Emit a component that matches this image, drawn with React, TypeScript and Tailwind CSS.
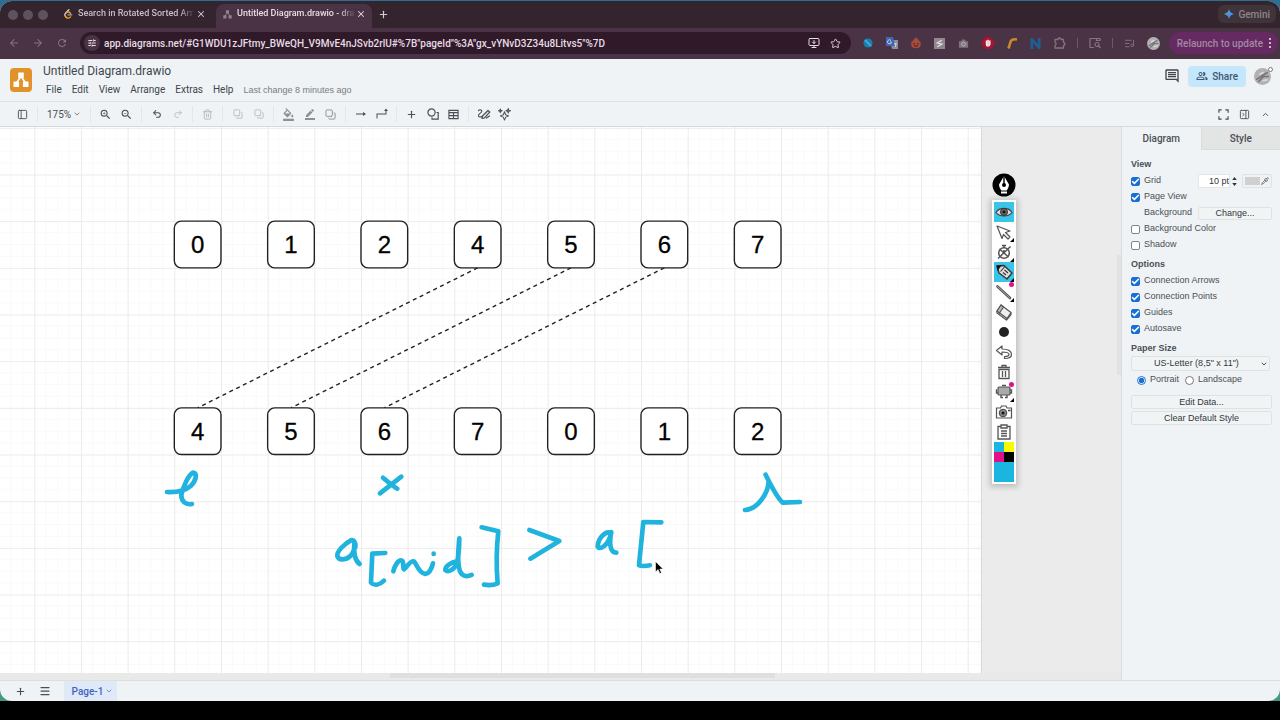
import type { ReactNode } from "react"
import {
    Check, ChevronDown, ChevronUp, Copy, ListMusic, Menu, MonitorDown, PanelLeft, PanelRightClose,
    Pipette, Plus, Redo2, Star, Trash2, Undo2, X,
} from "lucide-react"
import {
    MdArrowBack, MdArrowForward, MdBorderColor, MdFormatColorFill, MdOutlineComment,
    MdOutlinePeopleAlt, MdRefresh, MdTune, MdZoomIn, MdZoomOut,
} from "react-icons/md"

//diagram geometry, one grid cell is UNIT wide
const UNIT = 46.67
const LEFT = 34.3
const TOP = 47.5

const topRow = ["0", "1", "2", "4", "5", "6", "7"]
const bottomRow = ["4", "5", "6", "7", "0", "1", "2"]
const links = [[3, 0], [4, 1], [5, 2]]

const nodeX = (i: number) => LEFT + UNIT * (3 + 2 * i)
const centerX = (i: number) => nodeX(i) + UNIT / 2

function Node({ x, y, label }: { x: number; y: number; label: string }) {
    return (
        <g>
            <rect x={x} y={y} width={UNIT} height={UNIT} rx="7" fill="#fff" stroke="#222" strokeWidth="1.4" />
            <text x={x + UNIT / 2} y={y + 32} textAnchor="middle" fontSize="24" fill="#000" stroke="#000" strokeWidth="0.3">{label}</text>
        </g>
    )
}

function Diagram() {
    const bottomY = TOP + UNIT * 5

    return (
        <svg className="block h-full w-full font-['Liberation_Sans',sans-serif]">
            <defs>
                <pattern id="grid" x={LEFT} y={TOP} width={UNIT} height={UNIT} patternUnits="userSpaceOnUse">
                    <path d="M11.7 0V47M23.3 0V47M35 0V47M0 11.7H47M0 23.3H47M0 35H47" stroke="#f9f9f9" fill="none" />
                    <path d="M0.5 0V47M0 0.5H47" stroke="#ebebeb" fill="none" />
                </pattern>
            </defs>
            <rect width="100%" height="100%" fill="url(#grid)" />

            {links.map(([from, to]) => (
                <line key={from} x1={centerX(from)} y1={TOP + UNIT * 2} x2={centerX(to)} y2={bottomY} stroke="#222" strokeWidth="1.4" strokeDasharray="4 3.6" />
            ))}
            {topRow.map((label, i) => <Node key={i} x={nodeX(i)} y={TOP + UNIT} label={label} />)}
            {bottomRow.map((label, i) => <Node key={i} x={nodeX(i)} y={bottomY} label={label} />)}

            {/* pen strokes */}
            <g fill="none" stroke="#1fb3de" strokeWidth="14" strokeLinecap="round" strokeLinejoin="round">
                <g transform="translate(150 333) scale(0.3333)">
                    <path d="M51 96C76 97 106 92 122 78C140 60 142 40 129 38C114 46 99 82 94 105C94 124 106 136 126 132" />
                    <path d="M699 53C712 64 728 78 742 86M754 50L690 100" />
                    <path d="M616 262C618 248 612 238 603 241C585 250 560 274 562 288C567 304 596 300 608 279C614 268 614 254 613 250C611 275 615 302 629 312" />
                    <path d="M706 279L667 281L663 368C674 379 690 374 702 362" />
                    <path d="M730 334C734 316 746 298 756 302C764 308 756 322 762 328C770 322 782 300 792 304C800 310 804 338 826 342C840 340 846 322 849 310M851 281V282" />
                    <path d="M920 304C905 306 886 318 886 330C894 338 912 330 920 312C926 290 928 262 928 235C925 270 920 306 930 334C938 352 954 350 965 345" />
                    <path d="M995 202L1045 214C1040 260 1038 310 1043 370C1030 376 1015 376 1002 374" />
                </g>
                <g transform="translate(500 333) scale(0.3333)">
                    <path d="M88 210L178 243L91 296" />
                    <path d="M332 218C315 212 294 236 293 260C299 272 326 258 334 216C328 245 328 278 349 278" />
                    <path d="M484 187L430 186L417 316C430 320 440 318 450 316" />
                    <path d="M797 44C812 75 830 110 848 128L900 126M806 62C806 95 776 148 735 150" />
                </g>
            </g>
            <path d="M655.500 434.500v10.500l2.600-2.400 1.700 4 1.700-.8-1.700-3.700h3.400z" fill="#000" stroke="#fff" strokeWidth="0.600" />
        </svg>
    )
}

function Tool({ label, active, corner, dot, children }: { label: string; active?: boolean; corner?: boolean; dot?: boolean; children: ReactNode }) {
    return (
        <button aria-label={label} className={`relative flex h-5 w-5 items-center justify-center ${active ? "bg-[#38c5e8]" : "bg-white"}`}>
            {children}
            {corner && <span className="absolute bottom-0 right-0 border-b-4 border-l-4 border-b-black border-l-transparent" />}
            {dot && <span className="absolute right-0 top-0 h-[5px] w-[5px] rounded-full bg-[#e0108a]" />}
        </button>
    )
}

function PenTools() {
    return (
        <div className="absolute right-[105px] top-[46px] flex flex-col items-center gap-[3px]">
            <button aria-label="Pen" className="h-6 w-6">
                <svg viewBox="0 0 24 24">
                    <circle cx="12" cy="12" r="11.500" fill="#000" />
                    <path d="M12 3L7 11.500C7 14 8.500 16 9.200 17.500H14.800C15.500 16 17 14 17 11.500Z" fill="#fff" />
                    <path d="M12 3V11" stroke="#000" strokeWidth="1.400" />
                    <path d="M9 19.500H15" stroke="#fff" strokeWidth="2" />
                    <circle cx="12" cy="12" r="2" fill="#000" />
                </svg>
            </button>
            <div className="flex flex-col bg-white p-[2px] shadow-[0_1px_6px_2px_rgba(0,0,0,0.2)]">
                <Tool label="Show" active>
                    <svg viewBox="0 0 18 18" className="h-[18px] w-[18px]">
                        <path d="M1 9.500C4 4 14 4 17 9.500C14 14 4 14 1 9.500Z" fill="#ddd" stroke="#444" strokeWidth="1.200" />
                        <circle cx="9" cy="9" r="3.500" fill="#666" stroke="#333" />
                        <circle cx="9" cy="9" r="1.400" fill="#111" />
                    </svg>
                </Tool>
                <Tool label="Select" corner>
                    <svg viewBox="0 0 18 18" className="h-[18px] w-[18px]">
                        <path d="M2 3L15 8L10.500 9.500L15 14L13 16L8.500 11.500L7 15.500Z" fill="#fff" stroke="#555" strokeWidth="1.200" strokeLinejoin="round" />
                    </svg>
                </Tool>
                <Tool label="Timer" corner>
                    <svg viewBox="0 0 18 18" className="h-[18px] w-[18px]" fill="none" stroke="#555" strokeWidth="1.500">
                        <circle cx="9" cy="10" r="5.300" />
                        <path d="M7 2.500H11M9 3V5M9 10V7M3 15.500L15.500 3.500M4.500 6L13.500 14" />
                    </svg>
                </Tool>
                <Tool label="Highlighter" active corner>
                    <svg viewBox="0 0 18 18" className="h-[18px] w-[18px]">
                        <path d="M2 3L9 2.500L17 10L12 16L4 10Z" fill="#ddd" stroke="#333" strokeWidth="1.400" strokeLinejoin="round" />
                        <path d="M1.500 2.500L6.500 2.500L2.500 8Z" fill="#111" />
                        <path d="M9.500 7L13 10M8 9.500L11 12M9.500 4L5.500 8.500" stroke="#333" strokeWidth="1.100" />
                    </svg>
                </Tool>
                <Tool label="Line" corner dot>
                    <svg viewBox="0 0 18 18" className="h-[18px] w-[18px]" strokeLinecap="round">
                        <path d="M2.500 3.500L15 15" stroke="#555" strokeWidth="2.600" />
                        <path d="M2.500 3.500L15 15" stroke="#aaa" strokeWidth="1" />
                    </svg>
                </Tool>
                <Tool label="Eraser">
                    <svg viewBox="0 0 18 18" className="h-[18px] w-[18px]" stroke="#555" strokeWidth="1.200" strokeLinejoin="round">
                        <path d="M6 2L16 9.500L12 15.500L2 8Z" fill="#eee" />
                        <path d="M2 8L6 2L8.500 4L4.500 10Z" fill="#bbb" />
                        <path d="M2 8V10L11.500 17L16 11.500V9.500" fill="none" />
                    </svg>
                </Tool>
                <Tool label="Pen size"><span className="h-[10px] w-[10px] rounded-full bg-[#222]" /></Tool>
                <Tool label="Undo">
                    <svg viewBox="0 0 18 18" className="h-[18px] w-[18px]">
                        <path d="M1.500 7.500L7 3V6C13 6 16.500 8 16.500 11.500C16.500 14.500 14 15.500 9.500 15.500V13.500C12.500 13.500 14 13 14 11.500C14 9.500 11 9 7 9V12Z" fill="#fff" stroke="#555" strokeWidth="1.200" strokeLinejoin="round" />
                    </svg>
                </Tool>
                <Tool label="Clear">
                    <svg viewBox="0 0 18 18" className="h-[18px] w-[18px]" fill="none" stroke="#555" strokeWidth="1.300">
                        <path d="M3 4.500H15M7 4.500V2.500H11V4.500M4 6.500H14V15.500H4ZM7.500 8V14M10.500 8V14" />
                    </svg>
                </Tool>
                <Tool label="Board" corner dot>
                    <svg viewBox="0 0 18 18" className="h-[18px] w-[18px]">
                        <rect x="3" y="4" width="12" height="8" rx="1" fill="#aaa" stroke="#555" strokeWidth="1.200" />
                        <path d="M2 7H1.500V10H3M15 7H16.500V10H15M7 2.500H11M6 12V14.500H8M12 12V14.500H10" stroke="#555" strokeWidth="1.400" fill="none" />
                    </svg>
                </Tool>
                <Tool label="Screenshot">
                    <svg viewBox="0 0 18 18" className="h-[18px] w-[18px]">
                        <path d="M1.500 5H5.500L6.500 3H11L12 5H16.500V15H1.500Z" fill="#fff" stroke="#555" strokeWidth="1.200" />
                        <circle cx="8" cy="10" r="3.800" fill="#888" stroke="#444" />
                        <circle cx="8" cy="10" r="1.500" fill="#111" />
                        <path d="M13 7.500H15.500" stroke="#444" strokeWidth="1.500" />
                    </svg>
                </Tool>
                <Tool label="Clipboard">
                    <svg viewBox="0 0 18 18" className="h-[18px] w-[18px]" fill="none" stroke="#555" strokeWidth="1.300">
                        <path d="M6 3.500H3V16H15V3.500H12M6 2H12V5H6ZM6 8H12M6 10.500H12M6 13H12" />
                    </svg>
                </Tool>
                <div className="grid grid-cols-2">
                    <button aria-label="Blue" className="h-[10px] bg-[#1cb5e0]" />
                    <button aria-label="Yellow" className="h-[10px] bg-[#fbf800]" />
                    <button aria-label="Magenta" className="h-[10px] bg-[#e0108a]" />
                    <button aria-label="Black" className="h-[10px] bg-black" />
                </div>
                <div className="h-5 bg-[#1cb5e0]" />
            </div>
        </div>
    )
}

//three linked boxes, used in the tab and in the header
function DrawioGlyph({ className }: { className: string }) {
    return (
        <svg viewBox="0 0 16 16" className={className} fill="currentColor" stroke="currentColor">
            <rect x="5.200" y="0.500" width="5.600" height="5.500" rx="0.500" stroke="none" />
            <rect x="0.500" y="9.500" width="5.600" height="5.500" rx="0.500" stroke="none" />
            <rect x="9.900" y="9.500" width="5.600" height="5.500" rx="0.500" stroke="none" />
            <path d="M7.500 5L3.500 11M8.500 5L12.500 11" strokeWidth="1.700" />
        </svg>
    )
}

function TabStrip() {
    return (
        <div className="flex h-[27px] items-end bg-[#34242e] pr-1 text-[10px] font-medium text-[#d8ccd4]">
            <div className="flex h-6 flex-1 items-stretch">
                <div className="flex items-center gap-[5px] pb-[2px] pl-2 pr-[14px]">
                    <span className="h-[10px] w-[10px] rounded-full bg-[#5f535b]" />
                    <span className="h-[10px] w-[10px] rounded-full bg-[#5f535b]" />
                    <span className="h-[10px] w-[10px] rounded-full bg-[#5f535b]" />
                </div>
                <div className="flex w-[148px] items-center pb-1 pr-1 text-[9px]">
                    <svg viewBox="0 0 12 12" className="ml-px mr-[5px] h-[10px] w-[10px] shrink-0" fill="none" strokeWidth="1.700" strokeLinecap="round">
                        <path d="M7 1L3 5C2 6 2 8 3 9" stroke="#d8ccd4" />
                        <path d="M4 4.500C6 3 8 4 9 5M3 9C5 12 8 11 9 9.500" stroke="#eba02c" />
                        <path d="M6 7H10.500" stroke="#aaa" />
                    </svg>
                    <span className="flex-1 whitespace-nowrap text-[#c9bcc5] mask-r-from-85%">Search in Rotated Sorted Arr</span>
                    <button aria-label="Close tab"><X size={10} strokeWidth={2.5} /></button>
                </div>
                <div className="ml-[6px] flex w-[156px] items-center rounded-t-lg bg-[#4a3344] pb-1 pl-1 pr-[6px] text-[9px] text-[#e6dce3]">
                    <DrawioGlyph className="ml-[3px] mr-[5px] h-[9px] w-[9px] shrink-0 text-[#8f8390]" />
                    <span className="flex-1 whitespace-nowrap mask-r-from-85%">Untitled Diagram.drawio - dra</span>
                    <button aria-label="Close tab"><X size={10} strokeWidth={2.5} /></button>
                </div>
                <button aria-label="New tab" className="ml-[6px] pb-1"><Plus size={11} strokeWidth={2.5} /></button>
            </div>
            <button className="mb-[5px] flex h-[18px] items-center gap-1 rounded-md bg-[#40343b] px-[6px] text-[#91858c]">
                <svg viewBox="0 0 10 10" className="h-[10px] w-[10px]">
                    <defs>
                        <linearGradient id="gem" x1="0" x2="1" y2="0.500">
                            <stop offset="0" stopColor="#e3c04c" />
                            <stop offset="0.300" stopColor="#58b58a" />
                            <stop offset="0.600" stopColor="#4c8cf5" />
                        </linearGradient>
                    </defs>
                    <path d="M5 0C5.700 3 7 4.300 10 5C7 5.700 5.700 7 5 10C4.300 7 3 5.700 0 5C3 4.300 4.300 3 5 0Z" fill="url(#gem)" />
                </svg>
                Gemini
            </button>
        </div>
    )
}

function Extension({ label, children }: { label: string; children: ReactNode }) {
    return <button aria-label={label} className="flex w-6 items-center justify-center">{children}</button>
}

function AddressBar() {
    return (
        <div className="flex h-[31px] items-center bg-[#4a3344] pb-px pr-[2px] text-[#85747f]">
            <div className="flex w-20 items-center gap-3 pl-2">
                <button aria-label="Back"><MdArrowBack size={12} /></button>
                <button aria-label="Forward"><MdArrowForward size={12} /></button>
                <button aria-label="Reload"><MdRefresh size={12} /></button>
            </div>
            <div className="flex h-[22px] flex-1 items-center rounded-full bg-[#301a2a] pl-1 pr-[10px] text-[#e6dce3]">
                <span className="flex h-4 w-4 items-center justify-center rounded-full bg-[#4a3344]"><MdTune size={10} /></span>
                <input
                    aria-label="Address"
                    className="ml-1 min-w-0 flex-1 bg-transparent text-[10px] font-medium outline-none"
                    defaultValue={'app.diagrams.net/#G1WDU1zJFtmy_BWeQH_V9MvE4nJSvb2rlU#%7B"pageId"%3A"gx_vYNvD3Z34u8Litvs5"%7D'}
                />
                <button aria-label="Install app"><MonitorDown size={12} /></button>
                <button aria-label="Bookmark" className="ml-[10px]"><Star size={11} /></button>
            </div>
            <div className="ml-[5px] flex h-5">
                <Extension label="Browser sync">
                    <svg viewBox="0 0 12 12" className="h-[10px] w-[10px]"><circle cx="6" cy="6" r="5.500" fill="#167fb0" /><path d="M3 3L9 9" stroke="#42a8cc" strokeWidth="2.500" strokeLinecap="round" /></svg>
                </Extension>
                <Extension label="Translate">
                    <svg viewBox="0 0 12 12" className="h-3 w-3"><path d="M4 3H12V12H6Z" fill="#8f8f9a" /><path d="M0 0H7L9 9H0Z" fill="#3f66b8" /><path d="M5 3.500A2 2 0 1 0 5.500 5H4M8 7H11M9.500 6V10" fill="none" stroke="#ccd" /></svg>
                </Extension>
                <Extension label="Honey">
                    <svg viewBox="0 0 12 12" className="h-3 w-3"><path d="M6 0C7 2 9 2 9 4C11 4 11 7 10.500 9C9.500 12 2.500 12 1.500 9C1 7 1 4 3 4C3 2 5 2 6 0Z" fill="#a84b38" /><path d="M4 6V7.500M8 6V7.500M4 9H8" stroke="#3c2532" strokeWidth="1.200" /></svg>
                </Extension>
                <Extension label="Notes">
                    <svg viewBox="0 0 12 12" className="h-[11px] w-[11px]"><rect width="12" height="12" fill="#908790" /><path d="M8.500 2.500L3.500 5.500L8.500 6.500L3.500 9.500" fill="none" stroke="#e4dfe4" strokeWidth="1.400" /></svg>
                </Extension>
                <Extension label="Capture">
                    <svg viewBox="0 0 12 12" className="h-[11px] w-[11px]"><path d="M1 3.500H3.500L4.500 1.500H7.500L8.500 3.500H11V10.500H1Z" fill="#80737d" /><circle cx="6" cy="6.800" r="2" fill="none" stroke="#c2b8c0" /></svg>
                </Extension>
                <Extension label="Ad blocker">
                    <svg viewBox="0 0 12 12" className="h-3 w-3"><path d="M3.500 0H8.500L12 3.500V8.500L8.500 12H3.500L0 8.500V3.500Z" fill="#a71330" /><path d="M4.500 3.500V7.500C4.500 9.500 7.500 9.500 7.800 7.500V3.500M6.100 2.800V8" stroke="#eee" strokeWidth="1.500" fill="none" /></svg>
                </Extension>
                <Extension label="Rewards">
                    <svg viewBox="0 0 12 12" className="h-3 w-3"><path d="M2.500 11.500L4.500 5C5 3 7 1.800 11 2.500" fill="none" stroke="#c98a2c" strokeWidth="2.600" /></svg>
                </Extension>
                <Extension label="Notebook">
                    <svg viewBox="0 0 12 12" className="h-[11px] w-[11px]"><path d="M2 12V1.500L10 10.500V0" fill="none" stroke="#1f5d93" strokeWidth="3" /></svg>
                </Extension>
                <Extension label="Extensions">
                    <svg viewBox="0 0 12 12" className="h-3 w-3" fill="none" stroke="currentColor" strokeWidth="1.300" strokeLinejoin="round"><path d="M1 2.500H4A1.500 1.500 0 0 1 7 2.500H9.500V5.500A1.500 1.500 0 0 1 9.500 8.500V11H1V8.200A1.500 1.500 0 0 0 1 5.300Z" /></svg>
                </Extension>
            </div>
            <span className="mx-[5px] h-[10px] w-px bg-[#6c5866]" />
            <Extension label="Search tabs">
                <svg viewBox="0 0 12 12" className="h-3 w-3" fill="none" stroke="currentColor" strokeWidth="1.200"><path d="M5 10.500H1V1.500H11V4M7.500 1.500V3.500H11" /><circle cx="8" cy="7.500" r="2" /><path d="M9.500 9L11.500 11" /></svg>
            </Extension>
            <span className="mx-[5px] h-[10px] w-px bg-[#6c5866]" />
            <Extension label="Media"><ListMusic size={11} /></Extension>
            <Extension label="Profile"><Avatar className="h-[13px] w-[13px]" /></Extension>
            <button className="ml-[3px] flex h-[22px] items-center gap-1 whitespace-nowrap rounded-full bg-[#642a61] pl-2 pr-[6px] text-[10px] font-medium text-[#a687a5]">
                Relaunch to update
                <svg viewBox="0 0 4 12" className="ml-px h-3 w-1" fill="#e6dce3"><circle cx="2" cy="2" r="1.100" /><circle cx="2" cy="6" r="1.100" /><circle cx="2" cy="10" r="1.100" /></svg>
            </button>
        </div>
    )
}

function Avatar({ className }: { className: string }) {
    return (
        <svg viewBox="0 0 16 16" className={className}>
            <circle cx="8" cy="8" r="8" fill="#b3b0b2" />
            <path d="M2 11L13 4M4 13L9 8L14 8" stroke="#77737a" strokeWidth="1.500" fill="none" />
            <path d="M5 6L9 4M8 12L13 11" stroke="#dcdcdc" strokeWidth="1.500" />
        </svg>
    )
}

function Header() {
    return (
        <header className="flex h-[43px] items-center border-b border-[#dfe2e4] pl-[10px] pr-[9px] text-[#40464c]">
            <a href="#" aria-label="draw.io" className="flex h-6 w-[22px] items-center justify-center rounded-sm bg-[#e2922b] text-white">
                <DrawioGlyph className="h-4 w-4" />
            </a>
            <div className="ml-1 flex-1">
                <h1 className="pl-[7px] text-[12px] leading-5">Untitled Diagram.drawio</h1>
                <nav className="flex items-center gap-[10px] pl-[10px] text-[10px] leading-[18px]">
                    <button>File</button>
                    <button>Edit</button>
                    <button>View</button>
                    <button>Arrange</button>
                    <button>Extras</button>
                    <button>Help</button>
                    <span className="font-['Liberation_Sans',sans-serif] text-[9px] text-[#777d82]">Last change 8 minutes ago</span>
                </nav>
            </div>
            <div className="flex items-center pb-2">
                <button aria-label="Comments"><MdOutlineComment size={16} /></button>
                <button className="ml-2 flex h-[21px] items-center gap-1 rounded-sm bg-[#c4e7fb] px-2 text-[10px] font-medium text-[#3d5872]">
                    <MdOutlinePeopleAlt size={12} /> Share
                </button>
                <span className="relative ml-2">
                    <Avatar className="h-[17px] w-[17px]" />
                    <span className="absolute -right-[2px] -top-[1px] h-[5px] w-[5px] rounded-full border border-[#777] bg-white" />
                </span>
            </div>
        </header>
    )
}

function Icon({ label, off, children }: { label: string; off?: boolean; children: ReactNode }) {
    return <button aria-label={label} className={`flex w-[21px] items-center justify-center ${off ? "text-[#b4b8bb]" : "text-[#4a4f54]"}`}>{children}</button>
}

function Sep() {
    return <span className="mx-1 h-4 w-px self-center bg-[#e4e7e9]" />
}

function Toolbar() {
    return (
        <div className="flex h-[25px] items-stretch border-b border-[#d6d9da] pl-3 pr-1">
            <Icon label="Shapes panel"><PanelLeft size={11} /></Icon>
            <Sep />
            <button className="flex w-11 items-center justify-center gap-[2px] text-[10px] text-[#4a4f54]">175% <ChevronDown size={8} /></button>
            <Sep />
            <Icon label="Zoom in"><MdZoomIn size={13} /></Icon>
            <Icon label="Zoom out"><MdZoomOut size={13} /></Icon>
            <Sep />
            <Icon label="Undo"><Undo2 size={10} strokeWidth={2.5} /></Icon>
            <Icon label="Redo" off><Redo2 size={10} /></Icon>
            <Sep />
            <Icon label="Delete" off><Trash2 size={11} /></Icon>
            <Sep />
            <Icon label="To front" off><Copy size={10} className="rotate-180" /></Icon>
            <Icon label="To back" off><Copy size={10} className="rotate-180" /></Icon>
            <Sep />
            <Icon label="Fill color"><MdFormatColorFill size={13} className="text-[#8c9093]" /></Icon>
            <Icon label="Line color"><MdBorderColor size={12} className="text-[#8c9093]" /></Icon>
            <Icon label="Shadow"><Copy size={11} className="rotate-180 text-[#8c9093]" /></Icon>
            <Sep />
            <Icon label="Connection">
                <svg viewBox="0 0 12 12" className="h-3 w-3" fill="currentColor"><path d="M1 5.500H8V4L11 6L8 8V6.500H1Z" /></svg>
            </Icon>
            <Icon label="Waypoints">
                <svg viewBox="0 0 12 12" className="h-3 w-3" fill="currentColor"><path d="M0.500 10.500V5.500H9.500V3H8L10 0.500L12 3H10.500V6.500H1.500V10.500Z" /></svg>
            </Icon>
            <Sep />
            <Icon label="Insert"><Plus size={11} strokeWidth={2.5} /></Icon>
            <Icon label="Shapes">
                <svg viewBox="0 0 12 12" className="h-3 w-3" fill="none" stroke="currentColor" strokeWidth="1.200"><circle cx="4.500" cy="4.500" r="3.600" /><path d="M9.500 4.500H11.200V11.200H5V9.500" /></svg>
            </Icon>
            <Icon label="Table">
                <svg viewBox="0 0 12 12" className="h-[11px] w-[11px]" fill="none" stroke="currentColor" strokeWidth="1.200"><path d="M1 1.500H11V10.500H1ZM1 4H11M1 7.200H11M6 4V10.500" /></svg>
            </Icon>
            <Sep />
            <Icon label="Freehand">
                <svg viewBox="0 0 14 12" className="h-3 w-[14px]" fill="none" stroke="currentColor" strokeWidth="1.200" strokeLinecap="round" strokeLinejoin="round"><path d="M1.500 2.500C3 1 5.500 2 4.500 4C3 6 1 6 1.500 8C2 9.500 4 9 4.500 8.500M5 10.500L5.500 8L11 2.500L12.800 4L7.500 9.800ZM9.500 10C10.500 9 11.500 9 12.500 8" /></svg>
            </Icon>
            <Icon label="Generate">
                <svg viewBox="0 0 14 14" className="h-[13px] w-[13px]" fill="none" stroke="currentColor" strokeWidth="1.100" strokeLinejoin="round"><path d="M7 4L8.300 7.200L11.500 8.500L8.300 9.800L7 13L5.700 9.800L2.500 8.500L5.700 7.200ZM2.500 1L3 2.500L4.500 3L3 3.500L2.500 5L2 3.500L0.500 3L2 2.500ZM11 0.500L11.600 2.400L13.500 3L11.600 3.600L11 5.500L10.400 3.600L8.500 3L10.400 2.400Z" /></svg>
            </Icon>
            <div className="flex flex-1 justify-end">
                <Icon label="Fullscreen">
                    <svg viewBox="0 0 12 12" className="h-[11px] w-[11px]" fill="none" stroke="currentColor" strokeWidth="1.300"><path d="M1 4V1H4M8 1H11V4M11 8V11H8M4 11H1V8" /></svg>
                </Icon>
                <Icon label="Format panel"><PanelRightClose size={11} /></Icon>
                <Icon label="Collapse"><ChevronUp size={9} strokeWidth={2.5} /></Icon>
            </div>
        </div>
    )
}

function CheckRow({ label, checked, children }: { label: string; checked?: boolean; children?: ReactNode }) {
    return (
        <div className="flex h-4 items-center">
            <label className="flex flex-1 items-center gap-1 whitespace-nowrap">
                <span className="relative flex h-[9px] w-[9px]">
                    <input type="checkbox" defaultChecked={checked} className="peer h-[9px] w-[9px] appearance-none rounded-[2px] border border-[#80868b] bg-white checked:border-[#1a6fd4] checked:bg-[#1a6fd4]" />
                    <Check size={9} strokeWidth={4} className="pointer-events-none absolute inset-0 hidden text-white peer-checked:block" />
                </span>
                {label}
            </label>
            {children}
        </div>
    )
}

function FormatPanel() {
    const box = "rounded-[2px] border border-[#dfe2e4] bg-[#f1f4f5] text-[9px] text-[#33373a]"

    return (
        <aside className="w-[159px] shrink-0 border-l border-[#d9dcde] bg-[#eff3f5] font-['Liberation_Sans',sans-serif] text-[9px] text-[#4b5055]">
            <div className="flex h-[23px] font-['Roboto',sans-serif] text-[10px] font-medium">
                <button className="flex-1">Diagram</button>
                <button className="flex-1 border-b border-l border-[#dcdcdc] bg-[#e3e4e4]">Style</button>
            </div>
            <div className="flex flex-col gap-[3px] pl-[9px] pr-2 pt-[6px]">
                <section>
                    <h2 className="mb-px font-bold leading-4">View</h2>
                    <CheckRow label="Grid" checked>
                        <input aria-label="Grid size" defaultValue="10 pt" className="h-[14px] w-8 border border-[#e3e6e8] bg-white text-right text-[9px] text-[#33373a]" />
                        <span className="flex w-[9px] flex-col items-center">
                            <button aria-label="Increase" className="flex h-[6px] items-center"><svg viewBox="0 0 6 4" className="h-[3px] w-[5px]"><path d="M0 4L3 0L6 4Z" fill="#333" /></svg></button>
                            <button aria-label="Decrease" className="flex h-[6px] items-center"><svg viewBox="0 0 6 4" className="h-[3px] w-[5px]"><path d="M0 0L3 4L6 0Z" fill="#333" /></svg></button>
                        </span>
                        <button aria-label="Grid color" className="ml-[3px] flex h-[14px] w-[30px] items-center justify-between rounded-[2px] border border-[#dfe2e4] px-[2px]">
                            <span className="h-2 w-[15px] bg-[#d0d0d0]" />
                            <Pipette size={8} />
                        </button>
                    </CheckRow>
                    <CheckRow label="Page View" checked />
                    <div className="flex h-4 items-center justify-between pl-[13px]">
                        Background
                        <button className={`${box} h-[13px] w-[74px] leading-[11px]`}>Change...</button>
                    </div>
                    <CheckRow label="Background Color" />
                    <CheckRow label="Shadow" />
                </section>
                <section>
                    <h2 className="mb-px font-bold leading-4">Options</h2>
                    <CheckRow label="Connection Arrows" checked />
                    <CheckRow label="Connection Points" checked />
                    <CheckRow label="Guides" checked />
                    <CheckRow label="Autosave" checked />
                </section>
                <section>
                    <h2 className="font-bold leading-4">Paper Size</h2>
                    <div className="relative mr-[2px]">
                        <select aria-label="Paper size" className={`${box} block h-[15px] w-full appearance-none pr-2 text-center leading-[11px]`}>
                            <option>US-Letter (8,5" x 11")</option>
                        </select>
                        <ChevronDown size={8} strokeWidth={3} className="pointer-events-none absolute right-[2px] top-1" />
                    </div>
                    <div className="flex h-[18px] items-center gap-[6px] pl-[6px]">
                        <label className="flex items-center gap-1">
                            <input type="radio" name="orientation" defaultChecked className="h-[9px] w-[9px] accent-[#1a6fd4]" /> Portrait
                        </label>
                        <label className="flex items-center gap-1">
                            <input type="radio" name="orientation" className="h-[9px] w-[9px]" /> Landscape
                        </label>
                    </div>
                    <div className="mt-[6px] flex flex-col gap-[2px]">
                        <button className={`${box} h-[14px] leading-3`}>Edit Data...</button>
                        <button className={`${box} h-[14px] leading-3`}>Clear Default Style</button>
                    </div>
                </section>
            </div>
        </aside>
    )
}

function App() {
    return (
        <div className="flex h-screen flex-col overflow-hidden bg-black font-['Roboto',sans-serif]">
            <div className="flex min-h-0 flex-1 flex-col bg-linear-to-b from-[#2b6f92] to-[#4a9580] pt-px">
                <div className="flex min-h-0 flex-1 flex-col overflow-hidden rounded-xl bg-[#eff3f5]">
                    <TabStrip />
                    <AddressBar />
                    <Header />
                    <Toolbar />
                    <div className="flex min-h-0 flex-1">
                        <div className="flex min-w-0 flex-1 flex-col">
                            <main className="relative flex min-h-0 flex-1 bg-[#ebebeb]">
                                <div className="min-w-0 flex-1 border-r border-[#d8d8d8] bg-white">
                                    <Diagram />
                                </div>
                                <div className="flex w-[139px] flex-col justify-center">
                                    <span className="mb-[170px] h-[120px] w-1 self-end bg-[#e2e2e2]" />
                                </div>
                                <PenTools />
                            </main>
                            <div className="flex h-[7px] justify-center bg-[#e9e9e8] pl-11">
                                <span className="h-[5px] w-[385px] bg-[#dfdfdf]" />
                            </div>
                        </div>
                        <FormatPanel />
                    </div>
                    <footer className="flex h-[21px] items-stretch border-t border-[#dcdfe0] pl-3 text-[#4a4f54]">
                        <button aria-label="Insert page" className="flex w-4 items-center justify-center"><Plus size={11} strokeWidth={2.5} /></button>
                        <button aria-label="Pages" className="ml-[9px] flex w-4 items-center justify-center"><Menu size={12} strokeWidth={2.5} /></button>
                        <button className="ml-[11px] flex w-[53px] items-center justify-center gap-[2px] bg-[#dfe9f7] pl-1 text-[10px] font-medium text-[#3f66c4]">
                            Page-1 <ChevronDown size={8} />
                        </button>
                    </footer>
                </div>
            </div>
            <div className="h-[19px] shrink-0 bg-black" />
        </div>
    )
}

export default App
